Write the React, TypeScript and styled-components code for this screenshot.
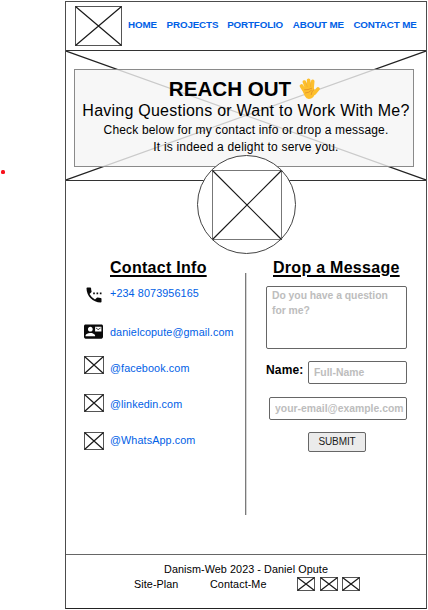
import React from "react";
import styled, { createGlobalStyle } from "styled-components";
import { MdContactMail, MdSettingsPhone } from "react-icons/md";

const GlobalStyle = createGlobalStyle`
  * { box-sizing: border-box; }
  body { margin: 0; background: #fff; color: #000; font-family: "Liberation Sans", Arial, sans-serif; overflow: hidden; }
`;

const Page = styled.div`
  position: relative;
  width: 428px;
  height: 610px;
  padding: 1px 0 0 65px;
`;
const Marker = styled.span`
  position: absolute;
  left: 1px;
  top: 170px;
  width: 4px;
  height: 4px;
  border-radius: 1.5px;
  background: #f8101c;
`;
const Frame = styled.div`
  display: flex;
  flex-direction: column;
  width: 362px;
  height: 608px;
  border: 1px solid #4c4c4c;
  border-bottom-color: #222;
`;
const Header = styled.header`
  display: flex;
  height: 49px;
  padding-left: 9px;
  border-bottom: 1px solid #333;
`;
const Logo = styled.div`
  display: flex;
  margin: 4px 6px 0 0;
`;
const Nav = styled.nav`
  display: flex;
  gap: 9.6px;
  padding-top: 17px;
`;
const NavLink = styled.a<{ $w: number }>`
  width: ${(p) => p.$w}px;
  font-size: 9.8px;
  letter-spacing: -0.14px;
  line-height: 12px;
  font-weight: 700;
  color: #0060e6;
  white-space: nowrap;
`;
const Hero = styled.section`
  position: relative;
  height: 130px;
  flex: none;
  padding: 18px 0 0 8px;
  border-bottom: 1px solid #333;
`;
const HeroCross = styled.svg`
  position: absolute;
  left: 0;
  top: 0;
`;
const Banner = styled.div`
  position: relative;
  display: flex;
  flex-direction: column;
  align-items: center;
  width: 340px;
  height: 98px;
  padding-left: 4px;
  border: 1px solid #8a8a8a;
  background: rgba(245, 245, 245, 0.8);
`;
const Title = styled.h1`
  display: flex;
  align-items: center;
  gap: 8px;
  margin: 7px 3px 0 0;
  height: 24px;
  font-size: 20.6px;
  line-height: 24px;
`;
const BannerLine = styled.p<{ $size: number; $h: number; $ls: number }>`
  margin: 0;
  font-size: ${(p) => p.$size}px;
  line-height: ${(p) => p.$h}px;
  letter-spacing: ${(p) => p.$ls}px;
  white-space: nowrap;
`;
const Avatar = styled.div`
  position: absolute;
  left: 131px;
  top: 104px;
  display: flex;
  align-items: center;
  justify-content: center;
  width: 99px;
  height: 99px;
  border: 1px solid #444;
  border-radius: 50%;
  background: #fff;
`;
const Main = styled.main`
  display: flex;
  flex: 1;
  padding-top: 77px;
`;
const Contacts = styled.section`
  width: 179px;
  padding-left: 18px;
`;
const ContactList = styled.div`
  padding-top: 8px;
`;
const Divider = styled.div`
  width: 2px;
  height: 242px;
  margin-top: 15px;
  border-left: 1px solid #7a7a7a;
  background: #d4d4d4;
`;
const Heading = styled.h2`
  margin: 0 0 0 26px;
  font-size: 16px;
  line-height: 20px;
  letter-spacing: 0.28px;
  text-decoration: underline;
  text-decoration-thickness: 1.5px;
  text-underline-offset: 1.5px;
  text-decoration-skip-ink: auto;
  white-space: nowrap;
`;
const ContactRow = styled.a<{ $h: number }>`
  display: flex;
  height: ${(p) => p.$h}px;
  font-size: 10.8px;
  letter-spacing: 0.1px;
  line-height: 14px;
  color: #0060e6;
`;
const IconCell = styled.span<{ $shift: number }>`
  display: flex;
  align-self: flex-start;
  width: 26px;
  margin-top: ${(p) => p.$shift}px;
  color: #0a0a0a;
`;
const MessageForm = styled.form`
  display: flex;
  flex-direction: column;
  width: 161px;
`;
const fieldStyle = `
  display: block;
  border: 1px solid #666;
  border-radius: 2px;
  background: #fff;
  font-family: "Liberation Sans", Arial, sans-serif;
  font-size: 10.4px;
  font-weight: 700;
  margin: 0;
  outline: none;
  &::placeholder { color: #bdbdbd; opacity: 1; }
`;
const Question = styled.textarea`
  ${fieldStyle}
  width: 141px;
  height: 63px;
  margin: 8px 0 0 19px;
  padding: 1px 5px;
  line-height: 15px;
  letter-spacing: -0.04px;
  resize: none;
`;
const NameRow = styled.div`
  display: flex;
  margin: 12px 0 0 19px;
`;
const Label = styled.label`
  width: 42px;
  font-size: 12px;
  line-height: 18px;
  font-weight: 700;
  letter-spacing: 0.15px;
`;
const Field = styled.input<{ $w: number }>`
  ${fieldStyle}
  width: ${(p) => p.$w}px;
  height: 23px;
  padding: 0 0 0 5px;
`;
const EmailRow = styled.div`
  margin: 13px 0 0 22px;
`;
const Submit = styled.button`
  width: 58px;
  height: 20px;
  margin: 12px 0 0 61px;
  padding: 0;
  border: 1px solid #666;
  border-radius: 2px;
  background: #ebebeb;
  color: #1a1a1a;
  font: 10px/18px "Liberation Sans", Arial, sans-serif;
  letter-spacing: -0.1px;
`;
const Footer = styled.footer`
  height: 54px;
  padding-top: 7px;
  border-top: 1px solid #666;
  font-size: 10.8px;
  letter-spacing: 0.07px;
  line-height: 15px;
`;
const Copyright = styled.div`
  text-align: center;
`;
const FooterRow = styled.div`
  display: flex;
  padding-left: 68px;
`;
const FooterLink = styled.a<{ $w: number }>`
  width: ${(p) => p.$w}px;
`;
const Socials = styled.div`
  display: flex;
  gap: 4.5px;
`;

function Placeholder({ w, h, edge = "#555" }: { w: number; h: number; edge?: string }) {
  return (
    <svg width={w} height={h} viewBox={`0 0 ${w} ${h}`} fill="none">
      <rect x=".5" y=".5" width={w - 1} height={h - 1} stroke={edge} />
      <path d={`M.5 .5L${w - 0.5} ${h - 0.5}M${w - 0.5} .5L.5 ${h - 0.5}`} stroke="#1a1a1a" strokeWidth="1.2" />
    </svg>
  );
}

const Hand = () => (
  <svg width="21" height="22" viewBox="0 0 21 22" fill="none" strokeLinecap="round">
    <path d="M2.5 8L5.6 13M5.4 4L7.6 10M9.6 2.2L10 10M13.7 3.4L13 11M19 10.8L15.5 15" stroke="#fdbf2d" strokeWidth="3.6" />
    <path d="M3.6 11Q8 6 14.6 9.5L16.5 14.5Q15 20.6 9.8 21Q5 20.6 3.6 11Z" fill="#fdbf2d" />
    <path d="M5.6 11.8Q9 12.2 12.6 10.3M6.5 15Q10 15 12.6 12.2M14.8 11.6Q12.3 13.6 12.2 16.6" stroke="#e2942a" strokeWidth=".9" />
    <path d="M6.9 4.6L8.2 8.6M11.7 4.6L11.5 8.6" stroke="#efa92c" strokeWidth=".6" />
  </svg>
);

export default function App() {
  return (
    <Page>
      <GlobalStyle />
      <Marker />
      <Frame>
        <Header>
          <Logo><Placeholder w={47} h={40} /></Logo>
          <Nav>
            <NavLink $w={29}>HOME</NavLink>
            <NavLink $w={51}>PROJECTS</NavLink>
            <NavLink $w={56}>PORTFOLIO</NavLink>
            <NavLink $w={51}>ABOUT ME</NavLink>
            <NavLink $w={64}>CONTACT ME</NavLink>
          </Nav>
        </Header>
        <Hero>
          <HeroCross width="360" height="129" viewBox="0 0 360 129">
            <path d="M0 0L360 129M360 0L0 129" stroke="#222" strokeWidth="1.2" />
          </HeroCross>
          <Banner>
            <Title>REACH OUT <Hand /></Title>
            <BannerLine $size={16} $h={20} $ls={0.24}>Having Questions or Want to Work With Me?</BannerLine>
            <BannerLine $size={12} $h={18} $ls={0.16}>Check below for my contact info or drop a message.</BannerLine>
            <BannerLine $size={12} $h={17} $ls={0.18}>It is indeed a delight to serve you.</BannerLine>
          </Banner>
          <Avatar><Placeholder w={70} h={70} edge="#777" /></Avatar>
        </Hero>
        <Main>
          <Contacts>
            <Heading>Contact Info</Heading>
            <ContactList>
              <ContactRow $h={39}><IconCell $shift={-1}><MdSettingsPhone size={20} /></IconCell><span>+234 8073956165</span></ContactRow>
              <ContactRow $h={36}><IconCell $shift={-3}><MdContactMail size={19} /></IconCell><span>danielcopute@gmail.com</span></ContactRow>
              <ContactRow $h={36}><IconCell $shift={-5}><Placeholder w={20} h={18} /></IconCell><span>@facebook.com</span></ContactRow>
              <ContactRow $h={36}><IconCell $shift={-3}><Placeholder w={20} h={18} /></IconCell><span>@linkedin.com</span></ContactRow>
              <ContactRow $h={36}><IconCell $shift={-1}><Placeholder w={20} h={18} /></IconCell><span>@WhatsApp.com</span></ContactRow>
            </ContactList>
          </Contacts>
          <Divider />
          <MessageForm>
            <Heading>Drop a Message</Heading>
            <Question placeholder="Do you have a question for me?" />
            <NameRow>
              <Label>Name:</Label>
              <Field $w={99} placeholder="Full-Name" />
            </NameRow>
            <EmailRow><Field $w={138} placeholder="your-email@example.com" /></EmailRow>
            <Submit type="button">SUBMIT</Submit>
          </MessageForm>
        </Main>
        <Footer>
          <Copyright>Danism-Web 2023 - Daniel Opute</Copyright>
          <FooterRow>
            <FooterLink $w={76}>Site-Plan</FooterLink>
            <FooterLink $w={87}>Contact-Me</FooterLink>
            <Socials>
              <Placeholder w={18} h={14} /><Placeholder w={18} h={14} /><Placeholder w={18} h={14} />
            </Socials>
          </FooterRow>
        </Footer>
      </Frame>
    </Page>
  );
}
